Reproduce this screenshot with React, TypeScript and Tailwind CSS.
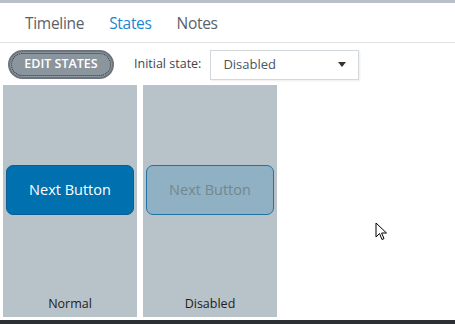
const states = [
  { name: 'Normal', disabled: false },
  { name: 'Disabled', disabled: true },
];

function StatePanel({ name, disabled }: { name: string; disabled: boolean }) {
  return (
    <div className="w-[134px] h-[232px] bg-[#b8c2c9] flex flex-col items-center">
      <div className="flex-1 flex items-center w-full px-[3px]">
        {disabled ? (
          <div className="w-full h-[50px] rounded-[7px] border-[1.5px] border-[#1f74a4] bg-[#8fb1c3] flex items-center justify-center text-[14.5px] text-[#74868f]">
            Next Button
          </div>
        ) : (
          <div className="w-full h-[50px] rounded-[7px] border border-[#0b5f92] bg-[#0070ae] flex items-center justify-center text-[14.5px] text-white">
            Next Button
          </div>
        )}
      </div>
      <span className="text-[12.5px] text-[#1d1d22] mb-[3px]">{name}</span>
    </div>
  );
}

export default function App() {
  return (
    <div className="w-[455px] h-[324px] bg-white flex flex-col font-['Open_Sans',sans-serif] relative overflow-hidden">
      {/* top frame edge */}
      <div className="h-[3px] bg-[#b9c0c9]" />

      {/* Tabs */}
      <div className="h-[40px] flex items-center gap-[25px] pl-[25px] pt-[2px] border-b border-[#dfe3e6] text-[15.5px] tracking-[-0.3px]">
        <span className="text-[#5b6168]">Timeline</span>
        <span className="text-[#1b87d0]">States</span>
        <span className="text-[#5b6168]">Notes</span>
      </div>

      {/* Toolbar */}
      <div className="flex items-center h-[42px] pl-[8px] pt-[1px]">
        <button className="w-[106px] h-[29px] rounded-full bg-[#8b959d] border-2 border-[#6c757d] flex items-center justify-center">
          <span className="w-[100px] h-[23px] rounded-full border border-dotted border-[#2c3238] flex items-center justify-center text-[12.5px] font-semibold text-white">
            EDIT STATES
          </span>
        </button>
        <span className="ml-[20px] text-[12.5px] text-[#3f464d]">Initial state:</span>
        <div className="ml-[9px] w-[149px] h-[30px] border border-[#d3d8dc] shadow-[1px_1px_2px_rgba(0,0,0,0.08)] flex items-center justify-between pl-[12px] pr-[12px]">
          <span className="text-[13px] text-[#4a5560]">Disabled</span>
          <svg width="8" height="5" viewBox="0 0 8 5">
            <path d="M0 0 H8 L4 5 Z" fill="#333" />
          </svg>
        </div>
      </div>

      {/* State panels */}
      <div className="flex gap-[6px] pl-[3px]">
        {states.map((s) => (
          <StatePanel key={s.name} name={s.name} disabled={s.disabled} />
        ))}
      </div>

      <div className="flex-1" />
      <div className="h-[4px] bg-[#2c2f34]" />

      {/* mouse cursor */}
      <svg className="absolute left-[375px] top-[222px]" width="14" height="20" viewBox="0 0 14 20">
        <path d="M1 1 L1 15 L4.5 11.5 L7 17.5 L9 16.6 L6.6 11 L11.5 11 Z" fill="white" stroke="black" strokeWidth="1" strokeLinejoin="round" />
      </svg>
    </div>
  );
}
